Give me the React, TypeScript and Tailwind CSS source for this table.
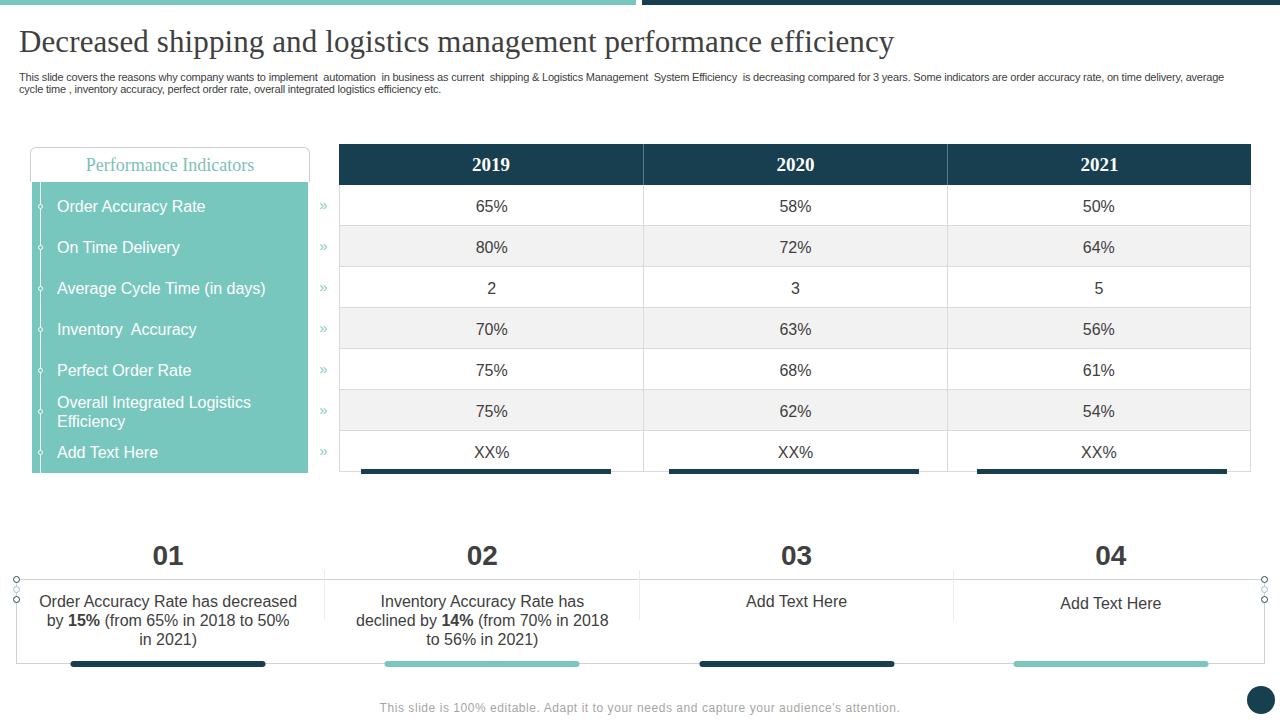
import React from 'react';

const rows = [
  { label: 'Order Accuracy Rate', v: ['65%', '58%', '50%'] },
  { label: 'On Time Delivery', v: ['80%', '72%', '64%'] },
  { label: 'Average Cycle Time (in days)', v: ['2', '3', '5'] },
  { label: 'Inventory\u00a0 Accuracy', v: ['70%', '63%', '56%'] },
  { label: 'Perfect Order Rate', v: ['75%', '68%', '61%'] },
  { label: 'Overall Integrated Logistics Efficiency', v: ['75%', '62%', '54%'] },
  { label: 'Add Text Here', v: ['XX%', 'XX%', 'XX%'] },
];

const years = ['2019', '2020', '2021'];

const notes: { num: string; text: React.ReactNode; bar: string; w: string; pt: string }[] = [
  {
    num: '01',
    text: (
      <>
        Order Accuracy Rate has decreased by <b>15%</b> (from 65% in 2018 to 50%
        <br />
        in 2021)
      </>
    ),
    bar: 'bg-[#173f4f]',
    w: 'w-[262px]',
    pt: 'pt-[12px]',
  },
  {
    num: '02',
    text: (
      <>
        Inventory Accuracy Rate has declined by <b>14%</b> (from 70% in 2018 to 56% in 2021)
      </>
    ),
    bar: 'bg-[#7cc5bd]',
    w: 'w-[256px]',
    pt: 'pt-[12px]',
  },
  { num: '03', text: 'Add Text Here', bar: 'bg-[#173f4f]', w: 'w-[256px]', pt: 'pt-[12px]' },
  { num: '04', text: 'Add Text Here', bar: 'bg-[#7cc5bd]', w: 'w-[256px]', pt: 'pt-[14px]' },
];

const sans = "font-['Liberation_Sans',Arial,sans-serif]";
const serif = "font-['Liberation_Serif','Times_New_Roman',serif]";

function Handles({ side }: { side: 'left' | 'right' }) {
  return (
    <div className={`absolute top-[-4px] flex flex-col gap-[3px] ${side === 'left' ? 'left-[-4px]' : 'right-[-4px]'}`}>
      <div className="w-[7px] h-[7px] rounded-full border border-[#2d4a5a] bg-white" />
      <div className="w-[7px] h-[7px] rounded-full border border-[#a8bfc8] bg-white" />
      <div className="w-[7px] h-[7px] rounded-full border border-[#2d4a5a] bg-white" />
    </div>
  );
}

export default function App() {
  return (
    <div className={`relative w-[1280px] h-[720px] overflow-hidden bg-white ${sans}`}>
      {/* top bars */}
      <div className="flex gap-[6px]">
        <div className="w-[636px] h-[5px] bg-[#78c7bf]" />
        <div className="flex-1 h-[5px] bg-[#173f4f]" />
      </div>

      {/* heading */}
      <h1 className={`mt-[19px] ml-[19px] text-[31px] leading-[36px] text-[#404040] tracking-[0.1px] ${serif}`}>
        Decreased shipping and logistics management performance efficiency
      </h1>
      <p className="mt-[11px] ml-[19px] w-[1250px] text-[11px] leading-[12px] text-[#404040] tracking-[-0.2px]">
        This slide covers the reasons why company wants to implement&nbsp; automation&nbsp; in business as current&nbsp; shipping &amp; Logistics Management&nbsp; System Efficiency&nbsp; is decreasing compared for 3 years. Some indicators are order accuracy rate, on time delivery, average
        <br />
        cycle time , inventory accuracy, perfect order rate, overall integrated logistics efficiency etc.
      </p>

      {/* indicators + table */}
      <div className="mt-[49px] ml-[30px] flex">
        <div className="w-[280px] pt-[3px]">
          <div className={`h-[35px] border border-b-0 border-[#cfcfcf] rounded-t-[6px] flex items-center justify-center text-[18px] text-[#7dbfb8] ${serif}`}>
            Performance Indicators
          </div>
          <div className="relative ml-[2px] w-[276px] h-[291px] bg-[#78c7bf] pt-[4px]">
            <div className="absolute left-[8px] top-0 bottom-0 w-px bg-white" />
            {rows.map((r) => (
              <div key={r.label} className="relative h-[41px] flex items-center pl-[25px] pr-[20px]">
                <div className="absolute left-[6px] w-[5px] h-[5px] rounded-full border border-white bg-[#78c7bf]" />
                <span className="text-[16px] leading-[19px] text-white">{r.label}</span>
              </div>
            ))}
          </div>
        </div>

        <div className="w-[29px] pt-[41px]">
          {rows.map((r) => (
            <div key={r.label} className="h-[41px] flex items-center justify-center pr-[2px] text-[15px] text-[#86ccc4]">
              »
            </div>
          ))}
        </div>

        <div className="w-[912px]">
          <div className="grid grid-cols-3 h-[41px] bg-[#173f4f]">
            {years.map((y, i) => (
              <div
                key={y}
                className={`flex items-center justify-center pt-[1px] text-[19px] font-bold text-white ${serif} ${i > 0 ? 'border-l border-[#5a7a88]' : ''}`}
              >
                {y}
              </div>
            ))}
          </div>
          {rows.map((r, ri) => (
            <div
              key={r.label}
              className={`grid grid-cols-3 h-[41px] border-b border-x border-[#dadada] ${ri % 2 === 1 ? 'bg-[#f2f2f2]' : 'bg-white'}`}
            >
              {r.v.map((v, i) => (
                <div
                  key={i}
                  className={`flex items-center justify-center pt-[3px] text-[16px] text-[#404040] ${i > 0 ? 'border-l border-[#dadada]' : ''}`}
                >
                  {v}
                </div>
              ))}
            </div>
          ))}
          <div className="flex gap-[58px] ml-[22px] -mt-[3px]">
            {years.map((y) => (
              <div key={y} className="w-[250px] h-[5px] bg-[#173f4f]" />
            ))}
          </div>
        </div>
      </div>

      {/* summary notes */}
      <div className="mt-[66px] ml-[11px] w-[1257px] grid grid-cols-4">
        {notes.map((n) => (
          <div key={n.num} className="text-center text-[28px] leading-[32px] font-bold text-[#404040]">
            {n.num}
          </div>
        ))}
      </div>
      <div className="relative mt-[7px] ml-[16px] w-[1249px] h-[85px] border border-[#d2d2d2]">
        <Handles side="left" />
        <Handles side="right" />
        <div className="-ml-[6px] w-[1257px] h-full grid grid-cols-4">
          {notes.map((n, i) => (
            <div key={n.num} className={`relative flex justify-center ${n.pt}`}>
              {i > 0 && <div className="absolute left-[-1px] top-[-10px] h-[50px] w-px bg-[#ececec]" />}
              <p className={`${n.w} text-[16px] leading-[19px] text-[#404040] text-center`}>{n.text}</p>
              <div className={`absolute bottom-[-4px] left-1/2 -translate-x-1/2 w-[195px] h-[6px] rounded-full ${n.bar}`} />
            </div>
          ))}
        </div>
      </div>

      <p className="mt-[37px] text-center text-[12px] leading-[14px] text-[#a6a6a6] tracking-[0.55px]">
        This slide is 100% editable. Adapt it to your needs and capture your audience's attention.
      </p>

      <div className="absolute left-[1247px] top-[686px] w-[28px] h-[28px] rounded-full bg-[#173f4f]" />
    </div>
  );
}
